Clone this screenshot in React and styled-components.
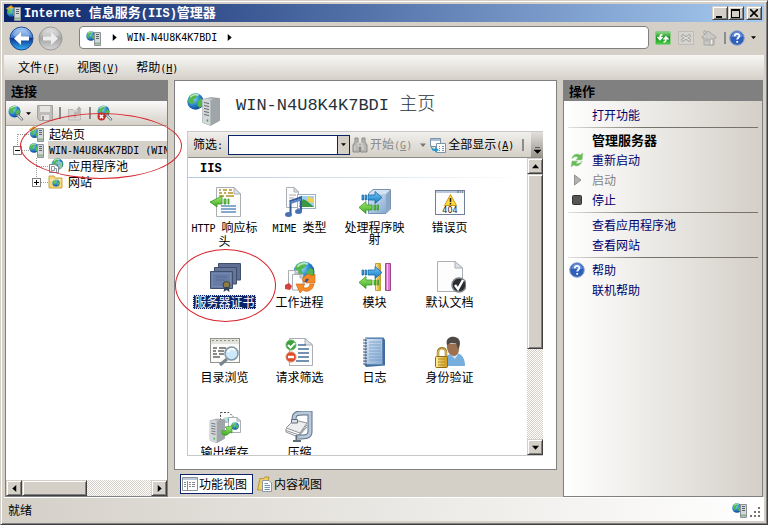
import React from "react";
import styled, { createGlobalStyle, css } from "styled-components";

const face = "#d4d0c8";
const navy = "#0a246a";

const GlobalStyle = createGlobalStyle`
  * {
    box-sizing: border-box;
  }

  body {
    margin: 0;
    color: #000;
    font: 12px/16px "Noto Sans CJK SC", sans-serif;
  }

  button, input {
    margin: 0;
    padding: 0;
    border: 0;
    color: inherit;
    font: inherit;
    background: none;
  }

  svg {
    display: block;
    flex: none;
  }
`;

const raised = css`
  background: ${face};
  border: 1px solid;
  border-color: ${face} #404040 #404040 ${face};
  box-shadow: inset 1px 1px #fff, inset -1px -1px #808080;
`;

const dither = css`
  background: repeating-conic-gradient(#fff 0 25%, ${face} 0 50%) 0 0 / 2px 2px;
`;

const Window = styled.div`
  ${raised}
  position: relative;
  display: flex;
  flex-direction: column;
  height: 100vh;
  padding: 3px;
  overflow: hidden;
`;

const Latin = styled.span`
  font-family: "DejaVu Sans Mono", monospace;
  font-size: 10px;
`;

const BoldLatin = styled.span`
  font-family: "Liberation Mono", monospace;
  font-size: 12px;
  font-weight: bold;
`;

const TitleBar = styled.header`
  display: flex;
  align-items: center;
  gap: 2px;
  height: 18px;
  padding: 0 2px;
  color: #fff;
  background: linear-gradient(90deg, ${navy}, #a6caf0);
`;

const Title = styled.h1`
  flex: 1;
  margin: 0;
  font-size: 13px;
  line-height: 18px;
  white-space: pre;
`;

const WindowButtons = styled.div`
  display: flex;
  color: #000;

  button:last-child {
    margin-left: 2px;
  }
`;

const WindowButton = styled.button`
  ${raised}
  display: grid;
  place-items: center;
  width: 16px;
  height: 14px;
`;

const NavBar = styled.nav`
  display: flex;
  align-items: center;
  height: 33px;
  padding: 0 8px 2px 5px;
`;

const NavButton = styled.button`
  margin: 2px 4px 0 0;
`;

const Address = styled.div`
  display: flex;
  flex: 1;
  align-items: center;
  gap: 9px;
  height: 23px;
  margin: 0 6px 0 12px;
  padding: 0 6px;
  background: #fff;
  border: 1px solid #808080;
  border-radius: 4px;
`;

const NavTools = styled.div`
  display: flex;
  align-items: center;
  gap: 7px;
`;

const Separator = styled.span`
  width: 2px;
  height: 12px;
  background: #8c8c8c;
`;

const HelpButton = styled.button`
  display: flex;
  align-items: center;
  gap: 6px;
  margin-left: -4px;
`;

const MenuBar = styled.div`
  display: flex;
  align-items: center;
  gap: 17px;
  height: 25px;
  padding: 0 14px;
  background: linear-gradient(#f8f7f5, ${face});
`;

const Main = styled.main`
  display: flex;
  flex: 1;
  gap: 6px;
  min-height: 0;
  padding: 0 1px;
`;

const SidePanel = styled.section`
  display: flex;
  flex: none;
  flex-direction: column;
  width: ${(p) => p.$width};
  border: 1px solid #808080;
  border-top: 0;
`;

const PanelHeader = styled.h2`
  margin: 0;
  height: 21px;
  padding: 0 5px;
  font-size: 13px;
  line-height: 22px;
  background: #808080;
`;

const ConnectionTools = styled.div`
  display: flex;
  align-items: center;
  justify-content: space-between;
  height: 25px;
  padding: 0 54px 0 2px;
  background: linear-gradient(#fbfaf9, ${face});
  border-bottom: 1px solid #a8a59e;

  button {
    display: flex;
    align-items: center;
    gap: 2px;
  }
`;

const Tree = styled.ul`
  flex: 1;
  margin: 0;
  padding: 0;
  overflow: hidden;
  list-style: none;
  background: #fff;
`;

const TreeRow = styled.li`
  display: flex;
  align-items: center;
  height: 16px;
  padding-left: ${(p) => (p.$level ? 25 : 6)}px;
  white-space: nowrap;

  > span {
    flex: 1;
    margin-left: 3px;
    padding-left: 1px;
    background: ${(p) => (p.$selected ? face : "none")};
  }
`;

const HScroll = styled.div`
  ${dither}
  display: flex;
  height: 16px;
`;

const VScroll = styled.div`
  ${dither}
  display: flex;
  flex: none;
  flex-direction: column;
  width: 16px;
`;

const ScrollButton = styled.button`
  ${raised}
  display: grid;
  flex: none;
  place-items: center;
  width: 16px;
  height: 16px;
`;

const Track = styled.div`
  display: flex;
  flex: 1;
  flex-direction: ${(p) => (p.$vertical ? "column" : "row")};
`;

const Thumb = styled.div`
  ${raised}
  flex: 0 0 ${(p) => p.$size};
`;

const Center = styled.section`
  display: flex;
  flex: 1;
  flex-direction: column;
  min-width: 0;
`;

const Page = styled.div`
  display: flex;
  flex: 1;
  flex-direction: column;
  min-height: 0;
  padding: 12px 13px 13px 12px;
  background: #fff;
  border: 1px solid #808080;
`;

const PageHeader = styled.div`
  display: flex;
  gap: 15px;
  height: 38px;
`;

const PageTitle = styled.h2`
  margin: 0;
  color: #26323a;
  font-size: 18px;
  font-weight: 300;
  line-height: 18px;
  white-space: pre;

  span {
    font-family: "Liberation Mono", monospace;
    font-size: 17px;
  }
`;

const PageBody = styled.div`
  display: flex;
  flex: 1;
  flex-direction: column;
  min-height: 0;
  border: 1px solid #c8c8c8;
  border-right: 0;
`;

const FilterBar = styled.div`
  display: flex;
  flex: none;
  align-items: center;
  height: 26px;
  padding-left: 5px;
  background: linear-gradient(#f1efec, ${face});
  border-bottom: 1px solid #8e8c87;
  white-space: nowrap;
`;

const ComboBox = styled.div`
  display: flex;
  width: 122px;
  height: 20px;
  margin: 0 2px 0 5px;
  background: #fff;
  border: 1px solid ${navy};

  input {
    flex: 1;
    min-width: 0;
    padding: 0 3px;
    outline: 0;
  }

  button {
    display: grid;
    place-items: center;
    width: 12px;
    background: ${face};
    border-left: 1px solid ${navy};
  }
`;

const ToolButton = styled.button`
  display: flex;
  align-items: center;
  gap: 2px;
  margin-right: ${(p) => p.$gap || 0}px;
  color: ${(p) => (p.disabled ? "#8a8883" : "#000")};
`;

const Overflow = styled.button`
  display: grid;
  gap: 1px;
  place-content: end center;
  width: 12px;
  height: 25px;
  margin-left: auto;
  padding-bottom: 3px;
  background: linear-gradient(#e2e0dc, #97948e);
`;

const ListArea = styled.div`
  display: flex;
  flex: 1;
  min-height: 0;
`;

const Group = styled.div`
  flex: 1;
  overflow: hidden;
`;

const GroupTitle = styled.h3`
  height: 20px;
  margin: 0;
  padding-left: 12px;
  line-height: 16px;
  border-bottom: 1px solid;
  border-image: linear-gradient(90deg, #b4c8de, #fff) 1;
`;

const Features = styled.div`
  display: grid;
  grid-template-columns: repeat(auto-fill, 75px);
  grid-auto-rows: 75px;
  padding-top: 8px;
`;

const FeatureButton = styled.button`
  display: flex;
  flex-direction: column;
  align-items: center;
  padding: 0 4px 0 2px;
  line-height: 12px;

  > span {
    margin-top: 2px;
    padding: 1px;
    color: ${(p) => (p.$selected ? "#fff" : "#000")};
    background: ${(p) => (p.$selected ? navy : "none")};
    outline: ${(p) => (p.$selected ? "1px dotted #f5db95" : "none")};
    outline-offset: -1px;
  }
`;

const ViewTabs = styled.div`
  display: flex;
  align-items: center;
  gap: 2px;
  height: 27px;
  padding-left: 6px;
`;

const ViewTab = styled.button`
  display: flex;
  align-items: center;
  gap: 1px;
  height: 20px;
  padding: 0 ${(p) => (p.$active ? 5 : 0)}px 0 1px;
  background: ${(p) => (p.$active ? "#fff" : "none")};
  border: 1px solid ${(p) => (p.$active ? navy : "transparent")};
`;

const ActionList = styled.div`
  flex: 1;
  padding: 4px 4px 0;
  background: linear-gradient(90deg, #fff, ${face});
`;

const ActionRow = styled.div`
  display: grid;
  grid-template-columns: 16px 1fr;
  align-items: center;
  gap: 7px;
  height: 20px;
  padding-left: 1px;
`;

const ActionLink = styled.a`
  grid-column: 2;
  color: #00006b;
  text-decoration: none;
`;

const ActionTitle = styled.strong`
  grid-column: 2;
  font-size: 13px;
`;

const ActionOff = styled.span`
  grid-column: 2;
  color: #858585;
`;

const Rule = styled.hr`
  height: 1px;
  margin: 2px 0;
  border: 0;
  background: linear-gradient(90deg, #e4e2dd, #77736a 40%);
`;

const StatusBar = styled.footer`
  display: flex;
  align-items: center;
  justify-content: space-between;
  height: 24px;
  padding: 0 2px 0 4px;
  background: linear-gradient(90deg, ${face}, #fff);
  border-top: 1px solid #fff;

  > div {
    display: flex;
    align-items: flex-end;
    gap: 2px;
  }
`;

const Ring = styled.div`
  position: absolute;
  left: ${(p) => p.$x}px;
  top: ${(p) => p.$y}px;
  width: ${(p) => p.$w}px;
  height: ${(p) => p.$h}px;
  border: 1px solid #d8232a;
  border-radius: 50%;
  pointer-events: none;
`;

/* ---------- drawings ---------- */

const Gradients = () => (
  <svg width="0" height="0" style={{ position: "absolute" }}>
    <defs>
      <radialGradient id="sea" cx=".35" cy=".3" r=".75">
        <stop offset="0" stopColor="#a8e4fa" />
        <stop offset=".5" stopColor="#2f8fd0" />
        <stop offset="1" stopColor="#0b3f94" />
      </radialGradient>
      <linearGradient id="metal">
        <stop offset="0" stopColor="#f4f5f6" />
        <stop offset="1" stopColor="#82888e" />
      </linearGradient>
      <linearGradient id="blueBall" x2="0" y2="1">
        <stop offset="0" stopColor="#a9cdf5" />
        <stop offset=".45" stopColor="#3b76cf" />
        <stop offset=".5" stopColor="#0c3592" />
        <stop offset="1" stopColor="#35b2f5" />
      </linearGradient>
      <linearGradient id="grayBall" x2="0" y2="1">
        <stop offset="0" stopColor="#dedede" />
        <stop offset=".5" stopColor="#a5a5a5" />
        <stop offset="1" stopColor="#d6d6d6" />
      </linearGradient>
      <linearGradient id="greenBox" x2="0" y2="1">
        <stop offset="0" stopColor="#8bdc86" />
        <stop offset=".5" stopColor="#16911b" />
        <stop offset="1" stopColor="#4fd44c" />
      </linearGradient>
      <linearGradient id="gold">
        <stop offset="0" stopColor="#fff0a0" />
        <stop offset="1" stopColor="#cf9716" />
      </linearGradient>
      <linearGradient id="cover" x2="1" y2="1">
        <stop offset="0" stopColor="#d6e6f5" />
        <stop offset="1" stopColor="#86a9d2" />
      </linearGradient>
      <linearGradient id="green" x2="0" y2="1">
        <stop offset="0" stopColor="#a6ec74" />
        <stop offset="1" stopColor="#3da822" />
      </linearGradient>
      <linearGradient id="blue" x2="0" y2="1">
        <stop offset="0" stopColor="#73c8f7" />
        <stop offset="1" stopColor="#1679c4" />
      </linearGradient>
    </defs>
  </svg>
);

const Icon = ({ size = 16, box = size, children }) => (
  <svg width={size} height={size} viewBox={`0 0 ${box} ${box}`} fill="none" aria-hidden="true">
    {children}
  </svg>
);

const Globe = ({ x, y, r }) => (
  <g transform={`translate(${x} ${y}) scale(${r / 8})`}>
    <circle r="8" fill="url(#sea)" />
    <path d="M-6-5C-3-8 1-8 2-6L0-3-2-2-1 1-4 3-7 0zM2 0L5-3 7-2C8 2 6 5 4 6L2 4z" fill="#53b84c" />
    <path d="M-5-4C-3-7 1-7 3-6" stroke="#e2fae8" strokeWidth="1.5" opacity=".7" />
  </g>
);

const Server = ({ x, y, s = 1 }) => (
  <g transform={`translate(${x} ${y}) scale(${s})`}>
    <path d="M0 2L8 0 17 1V23L8 28 0 25z" fill="url(#metal)" stroke="#8d9296" strokeWidth=".7" />
    <path d="M0 2L8 3V28L0 25z" fill="#d3d7da" />
    <path d="M8 3L17 1V23L8 28z" fill="#a0a5a9" />
    <path d="M1.500 5L6.500 6M1.500 8L6.500 9M1.500 11L6.500 12M1.500 14L6.500 15M1.500 17L6.500 18" stroke="#60676d" />
    <path d="M5 22V24" stroke="#2faa35" strokeWidth="1.500" />
  </g>
);

const SmallServer = () => (
  <g>
    <path d="M8.500 2.500H14.500V15.500H8.500z" fill="#d3d8da" stroke="#8b9396" />
    <path d="M10 4.500H13M10 6.500H13M10 8.500H13" stroke="#59636b" />
    <path d="M9 13.500H14" stroke="#8fb08e" strokeWidth="2" />
  </g>
);

const ServerIcon = ({ size }) =>
  size > 16 ? (
    <Icon size={size} box={34}>
      <Globe x={8.500} y={8.500} r={8.300} />
      <Server x={15.500} y={4.500} />
    </Icon>
  ) : (
    <Icon>
      <Globe x={5} y={6} r={4.800} />
      <SmallServer />
    </Icon>
  );

const StartIcon = () => (
  <Icon>
    <path d="M.5 3.500L5 .5 9 4 4 7z" fill="#f5b52c" stroke="#d08a28" strokeWidth=".7" />
    <Globe x={5.500} y={7.500} r={4.500} />
    <SmallServer />
  </Icon>
);

const Ball = ({ fill, back }) => (
  <Icon size={25}>
    <circle cx="12.500" cy="12.500" r="11.500" fill={fill} stroke={back ? "#234a8c" : "#999"} />
    <path d="M4 9C7 2 18 2 21 9 17 12 8 12 4 9z" fill="#fff" opacity=".25" />
    <path
      d={back ? "M5 12.500L12 6V10.500H20V14.500H12V19z" : "M20 12.500L13 6V10.500H5V14.500H13V19z"}
      fill={back ? "#fff" : "#ededed"}
    />
  </Icon>
);

const HelpIcon = () => (
  <Icon>
    <circle cx="8" cy="8" r="7.300" fill="#2f5fb8" stroke="#8ea5cf" />
    <path d="M2.500 7A5.500 5.500 0 0 1 13.500 7z" fill="#6f98dc" opacity=".8" />
    <path d="M5.800 6.200C5.800 3.200 10.300 3.200 10.300 6 10.300 7.700 8.200 7.700 8.200 9.500M8.200 11V12.700" stroke="#fff" strokeWidth="1.800" />
  </Icon>
);

const RefreshIcon = () => (
  <Icon>
    <rect x=".5" y="1.500" width="15" height="13" rx="1" fill="url(#greenBox)" stroke="#8fc78d" />
    <path d="M7.500 4.500C5.500 4.500 5 6 5 8M2.500 7L5 9.500 7.500 7M8.500 12C10.500 12 11 10.500 11 8.500M8.500 9.500L11 7 13.500 9.500" stroke="#fff" strokeWidth="1.600" />
  </Icon>
);

const StopIcon = () => (
  <Icon>
    <rect x=".5" y="1.500" width="15" height="13" fill="#d6d4cf" stroke="#bebcb8" />
    <path d="M3.500 5L12.500 11M3.500 11L12.500 5" stroke="#a3a19d" strokeWidth="3" />
    <path d="M4 5.500L12 10.500M4 10.500L12 5.500" stroke="#e5e3df" strokeWidth="1.300" />
  </Icon>
);

const HomeIcon = () => (
  <Icon>
    <path d="M1 7L7 1 15 7V8H13V15H3V8H1z" fill="#cbc9c5" stroke="#aaa8a4" />
    <path d="M3 1H5V4H3zM5 9H7V11H5zM9 9H12V15H9z" fill="#f0efed" stroke="#a5a39f" />
  </Icon>
);

const Caret = ({ dir = "down", size = 7, color = "#000" }) => {
  const turn = { down: 0, left: 90, up: 180, right: 270 }[dir];
  return (
    <svg width={size} height={size} viewBox="0 0 8 8" aria-hidden="true">
      <path d="M0 2H8L4 6.500z" fill={color} transform={`rotate(${turn} 4 4)`} />
    </svg>
  );
};

const ConnectIcon = ({ off }) => (
  <Icon>
    <Globe x={6.500} y={6.500} r={6} />
    <path d="M8 9L11 10 15 14 14 15.500 10 12z" fill="#dce1e5" stroke="#747c82" />
    {off && (
      <>
        <circle cx="4.500" cy="11.500" r="4" fill="#c22b27" />
        <path d="M2.800 9.800L6.200 13.200M6.200 9.800L2.800 13.200" stroke="#fff" strokeWidth="1.500" />
      </>
    )}
  </Icon>
);

const SaveIcon = () => (
  <Icon>
    <path d="M.5.5H15.500V15.500H2.500L.5 13.500z" fill="#c0beba" stroke="#a3a19e" />
    <path d="M3 1H13V7H3zM4 10H12V15H4z" fill="#e6e4e1" />
    <path d="M5 11H7V15H5z" fill="#969492" />
  </Icon>
);

const UpIcon = () => (
  <Icon>
    <path d="M1.500 4.500H6L7.500 6H13.500V15H1.500z" fill="#d6d4d1" stroke="#bcbab7" />
    <path d="M8 13V8H12V3M10 5L12 2.500 14 5" stroke="#b1afac" strokeWidth="1.500" />
  </Icon>
);

const PoolIcon = () => (
  <Icon>
    <Globe x={9.500} y={6} r={5.800} />
    <path d="M11 3V11M13 4V11" stroke="#c4dcea" />
    <path d="M1.500 6.500H7L10.500 9V14.500H1.500z" fill="#fff" stroke="#7c8991" />
    <path d="M3.500 8.500H6.500V12.500H3.500zM6.500 10.500H8.500V14" stroke="#8a979f" />
  </Icon>
);

const SitesIcon = () => (
  <Icon>
    <path d="M1 2H6L7.500 4H14V14H1z" fill="#f4d778" stroke="#c8a344" />
    <path d="M2 6H13" stroke="#fff5c8" />
    <Globe x={8} y={9} r={3.600} />
  </Icon>
);

const BinocularsIcon = () => (
  <Icon>
    <path d="M3 1H6V5L7.500 8V15H1V8L3 5zM10 1H13V5L15 8V15H8.500V8L10 5z" fill="#b8b6b3" stroke="#8e8c89" />
    <path d="M6 6H10V9H6zM3 9V13M11 9V13" fill="#aaa8a5" stroke="#dedcda" />
  </Icon>
);

const ShowAllIcon = () => (
  <Icon>
    <path d="M.5 1.500H10.500V9.500H.5z" fill="#fff" stroke="#7c94ab" />
    <path d="M1 2H10V4H1z" fill="#a9bfd3" />
    <path d="M6.500 6.500H15.500V15.500H6.500z" fill="#fff" stroke="#7c94ab" />
    <path d="M9 9.500H10M12 9.500H14M9 11.500H10M12 11.500H14M9 13.500H10M12 13.500H14" stroke="#718eb2" />
    <path d="M1 8C2 11 3 12 5 12V10L9 13 5 15.500V14C2 14 1 12 1 8z" fill="#2698d1" />
  </Icon>
);

const ArrowPair = () => (
  <g strokeWidth=".8">
    <path d="M9 9H16V5.500L23 11.500 16 17.500V14H9zM6 9H7.500V14H6zM3 9H4.500V14H3z" fill="url(#blue)" stroke="#156aa9" />
    <path d="M13 19H7V15.500L0 21.500 7 27.500V24H13zM15 19H16.500V24H15zM18 19H19.500V24H18z" fill="url(#green)" stroke="#369823" />
  </g>
);

const Sheet = ({ d, fold }) => (
  <>
    <path d={d} fill="#fdfdfd" stroke="#a9afb5" />
    <path d={fold} fill="#dde3e8" stroke="#a9afb5" />
  </>
);

const drawings = {
  headers: (
    <>
      <Sheet d="M7.500 1.500H25L31.500 8V30.500H7.500z" fold="M25 1.500V8H31.500z" />
      <path d="M10 4H12M14 4H18M20 4H23M10 7H13M15 7H17M19 7H24M10 10H15M17 10H25" stroke="#b8931e" strokeWidth="1.500" />
      <path d="M12 20H27M12 23H27M12 26H27" stroke="#5f8dc0" strokeWidth="1.300" />
      <path d="M13 13V10L1 16 8 21V18H13zM15 13H17V18H15zM19 13H20V18H19z" fill="url(#green)" stroke="#369823" strokeWidth=".8" />
    </>
  ),
  mime: (
    <>
      <Sheet d="M2.500 1.500H10L14.500 6V21.500H2.500z" fold="M10 1.500V6H14.500z" />
      <path d="M5 9H12M5 12H10M5 15H8" stroke="#aaa" />
      <rect x="13.500" y="8.500" width="18" height="14" fill="#fff" stroke="#9cb0c5" />
      <path d="M15 10H30V21H15z" fill="#9dd2ef" />
      <path d="M15 21L19 13 23 15 30 21z" fill="#3a9843" />
      <path d="M23 10L30 13V17L24 16z" fill="#eed150" />
      <path d="M6.500 28V15L17 11.500V25" stroke="#365b9c" strokeWidth="2" />
      <path d="M6.500 17L17 13.500" stroke="#5d88c4" strokeWidth="2" />
      <ellipse cx="4.500" cy="28.500" rx="3.500" ry="2.500" fill="#4671b4" />
      <ellipse cx="14.500" cy="25.500" rx="3.500" ry="2.500" fill="#4671b4" />
    </>
  ),
  handlers: (
    <>
      <path d="M9.500 7.500L14 3.500H31.500V23L27 27.500H9.500z" fill="#d3e1f0" stroke="#7893b1" />
      <path d="M10 8H27V27H10z" fill="url(#cover)" />
      <path d="M27 8L31 4V23L27 27z" fill="#8ba6c5" />
      <ArrowPair />
    </>
  ),
  errors: (
    <>
      <rect x="1.500" y="4.500" width="29" height="24" fill="#fdfdfe" stroke="#6f7f99" />
      <path d="M2 5H30V7H2z" fill="#b9c9dd" />
      <path d="M23 6H25M26 6H27M28 6H29" stroke="#52677e" />
      <path d="M16.500 8.500L10.500 19.500H22.500z" fill="#ffd93b" stroke="#c99911" strokeLinejoin="round" />
      <path d="M16.500 12V16M16.500 17V18.500" stroke="#222" strokeWidth="1.600" />
      <text x="16" y="27" fill="#222" fontFamily="DejaVu Sans" fontSize="8" textAnchor="middle">404</text>
    </>
  ),
  certs: (
    <>
      <path d="M9.500 2.500H31.500V19H9.500z" fill="#5d7093" stroke="#3f4f6b" />
      <path d="M5.500 6.500H27.500V23H5.500z" fill="#64779a" stroke="#3f4f6b" />
      <path d="M1.500 10.500H23.500V27.500H1.500z" fill="#667ca6" stroke="#3f4f6b" />
      <path d="M3.500 12.500H21.500V25.500H3.500z" stroke="#7589ad" />
      <path d="M7 16H18M7 19H16" stroke="#546a92" />
      <circle cx="17.500" cy="24" r="3.500" fill="#8f7b43" stroke="#3e413a" />
      <path d="M15.500 26L14.500 31 17.500 29 20.500 31 20 26" fill="#30415e" />
    </>
  ),
  workers: (
    <>
      <Globe x={20} y={11} r={10.500} />
      <Sheet d="M4.500 9.500H14V27H4.500z" fold="M11 9.500V13H14z" />
      <Sheet d="M8.500 13.500H19V29H8.500z" fold="M16 13.500V17H19z" />
      <path d="M1 24L5 22 8 25 6 29 1 28z" fill="#d7413c" />
      <path d="M18 19C21 13 25 12 28 15L31 13V22H22L25 18C22 17 21 18 21 21z" fill="#f58a26" stroke="#c66318" strokeWidth=".6" />
      <path d="M30 23C29 30 22 32 19 29L16 32 12 23H21L19 26C22 28 25 27 26 23z" fill="#f58a26" stroke="#c66318" strokeWidth=".6" />
    </>
  ),
  modules: (
    <>
      <path d="M16.500 2.500H21.500V29.500H16.500z" fill="url(#gold)" stroke="#c0a030" />
      <path d="M26.500 2.500H31.500V29.500H26.500z" fill="#d97cc9" stroke="#9c478e" />
      <path d="M28.500 3V29" stroke="#f3bdea" />
      <ArrowPair />
    </>
  ),
  docs: (
    <>
      <Sheet d="M3.500.5H21L28.500 7V30.500H3.500z" fold="M21 .5V7H28.500z" />
      <circle cx="25" cy="24" r="7" fill="#292c30" stroke="#7d8185" strokeWidth="1.500" />
      <path d="M21 24L24 28 29 19" stroke="#fff" strokeWidth="2.500" />
    </>
  ),
  browse: (
    <>
      <rect x="1.500" y="2.500" width="29" height="24" fill="#fbfbfa" stroke="#93938c" />
      <path d="M2 3H30V8H2z" fill="#e3e3dd" />
      <path d="M3 4.500H28" stroke="#8b8b83" strokeDasharray="2 2" />
      <path d="M4 12H8M10 12H17M4 15H7M9 15H15M4 18H8M10 18H15M4 21H11" stroke="#656565" strokeWidth="1.500" />
      <path d="M18 23L11 29" stroke="#76858f" strokeWidth="3" />
      <circle cx="22.500" cy="17.500" r="6.500" fill="#cbe9fa" stroke="#8295a4" strokeWidth="1.500" />
      <path d="M19 16C20 13 23 12 26 14" stroke="#fff" strokeWidth="2" />
    </>
  ),
  filtering: (
    <>
      <Sheet d="M5.500 2.500H21L28.500 9V29.500H5.500z" fold="M21 2.500V9H28.500z" />
      <path d="M14 9H22M14 13H25M14 17H25M14 21H25M12 25H25" stroke="#456d9b" strokeWidth="1.300" />
      <circle cx="7" cy="9" r="5" fill="#39a33a" stroke="#6fb36e" />
      <path d="M4 9L6.500 11.500 11 7" stroke="#fff" strokeWidth="2" />
      <circle cx="7" cy="21" r="5" fill="#df4a27" stroke="#e08b70" />
      <path d="M4 21H10" stroke="#fff" strokeWidth="2.500" />
    </>
  ),
  logging: (
    <>
      <path d="M6 1.500H24.500L26 4V29.500L7 31 5.500 29z" fill="#436d9e" />
      <path d="M7 2.500H23.500V28.500H7z" fill="url(#cover)" stroke="#5f87b5" />
      <path d="M10 6H22M10 9H22M10 12H22M10 15H22M10 18H22M10 21H22M10 24H22" stroke="#6e93c0" opacity=".7" />
      <path d="M6 2.500V29" stroke="#e4ebf3" strokeWidth="4" strokeDasharray="1 2" />
      <path d="M6 3.500V29" stroke="#4b5f7a" strokeWidth="4" strokeDasharray="1 2" />
    </>
  ),
  auth: (
    <>
      <path d="M10 30C10 20 15 17 21 17S31 21 31 30z" fill="#76aede" />
      <path d="M16 18L21 23 25 17z" fill="#d0e6f6" />
      <path d="M13 8C12 15 16 20 20 20S26 15 25 7z" fill="#9b7152" />
      <path d="M13 9C11 2 17 0 21 1 27 2 27 9 24 13L22 7 17 7z" fill="#4d4947" />
      <path d="M4 22V16C4 11 12 11 12 16V22" stroke="#9b7a26" strokeWidth="2.500" />
      <path d="M4 21V16C4 12 12 12 12 16V21" stroke="#f2d878" />
      <rect x="1.500" y="20.500" width="12" height="11" rx="1" fill="url(#gold)" stroke="#906b16" />
      <path d="M4 23H11M4 26H11M4 29H11" stroke="#b28a23" />
    </>
  ),
  caching: (
    <>
      <path d="M11.500 1.500H20L24.500 6V20H11.500z" fill="#fff" stroke="#474747" strokeDasharray="2 1.500" />
      <Sheet d="M19.500 6.500H28L31.500 10V21.500H19.500z" fold="M28 6.500V10H31.500z" />
      <Globe x={26} y={15} r={3.800} />
      <g opacity=".4"><Globe x={17} y={9} r={3} /></g>
      <Server x={1} y={8} s={0.85} />
      <path d="M13 19C15 21 17 20 18 18L16 16 23 15V22L21 21C19 25 15 25 13 23z" fill="url(#green)" stroke="#369823" strokeWidth=".7" />
    </>
  ),
  compress: (
    <>
      <path d="M2 17L10 9 23 12 16 22z" fill="#eceeef" stroke="#8e9397" />
      <path d="M2 18V21L14 26 23 16M2 19.500L15 24 23 14" stroke="#8e9397" />
      <path d="M10 8C10 2 14 2 19 2H26V21C26 26 21 26 14 26" stroke="#5f7084" strokeWidth="5" />
      <path d="M10 8C10 2 14 2 19 2H26V21C26 26 21 26 14 26" stroke="#b8c9db" strokeWidth="3" />
      <path d="M7.500 8.500H13.500V12H7.500z" fill="#d9e0e7" stroke="#606e7b" />
      <path d="M12.500 24V30M9 30H17" stroke="#606e7b" strokeWidth="2" />
    </>
  ),
};

const FeatureViewIcon = () => (
  <Icon>
    <path d="M.5 1.500H15.500V14.500H.5z" fill="#fff" stroke="#8b8f94" />
    <path d="M1 2H15V4H1z" fill="#b9c8da" />
    <path d="M5.500 5V14M2 6.500H4M2 8.500H4M2 10.500H4M7 6.500H9M10 6.500H13M7 8.500H9M10 8.500H13M7 10.500H9M10 10.500H13" stroke="#858a92" />
  </Icon>
);

const ContentViewIcon = () => (
  <Icon>
    <path d="M.5 14L3 2.500H7L8 1H12L11 5 8 14z" fill="#edcf68" stroke="#b99637" />
    <path d="M5.500 4.500H12L14.500 7V15.500H5.500z" fill="#fff" stroke="#8e98a2" />
    <path d="M7.500 7.500H11M7.500 9.500H13M7.500 11.500H13M7.500 13.500H13" stroke="#6f95bb" />
  </Icon>
);

const RestartIcon = () => (
  <Icon>
    <path d="M3 7C3 2 9 1 11 3L14 1 13 8H7L9 5.500C7 4 4 5 3 7zM13 9C12 14 7 15 5 13L2 15 3 9H9L7 11C9 12 12 11 13 9z" fill="#68ba59" stroke="#9ed092" strokeWidth=".6" />
  </Icon>
);

const PlayIcon = () => (
  <Icon>
    <path d="M5.500 3L12 8 5.500 13z" fill="#b3b3b3" stroke="#929292" />
  </Icon>
);

const StopSquare = () => (
  <Icon>
    <rect x="3.500" y="3.500" width="9" height="9" rx="1" fill="#555" stroke="#333" />
  </Icon>
);

const GripIcon = () => (
  <svg width="12" height="12" viewBox="0 0 12 12" aria-hidden="true">
    <path d="M8 1H10V3H8zM4 5H6V7H4zM8 5H10V7H8zM0 9H2V11H0zM4 9H6V11H4zM8 9H10V11H8z" fill="#77736c" />
  </svg>
);

/* Expander box and dotted guides in front of a tree node */
const Guide = ({ sign, last, first }) => (
  <svg width="17" height="16" viewBox="0 0 17 16" fill="none" aria-hidden="true">
    <path d={`M5.500 ${first ? 8 : 0}V${last ? 8 : 16}M6 8.500H17`} stroke="#999" strokeDasharray="1 1" />
    {sign && (
      <>
        <rect x="1.500" y="4.500" width="8" height="8" fill="#fff" stroke="#808080" />
        <path d={sign === "+" ? "M3 8.500H8M5.500 6V11" : "M3 8.500H8"} stroke="#000" />
      </>
    )}
  </svg>
);

/* ---------- content ---------- */

const features = [
  { icon: "headers", label: <><Latin>HTTP </Latin>响应标头</> },
  { icon: "mime", label: <><Latin>MIME </Latin>类型</> },
  { icon: "handlers", label: "处理程序映射" },
  { icon: "errors", label: "错误页" },
  { icon: "certs", label: "服务器证书", selected: true },
  { icon: "workers", label: "工作进程" },
  { icon: "modules", label: "模块" },
  { icon: "docs", label: "默认文档" },
  { icon: "browse", label: "目录浏览" },
  { icon: "filtering", label: "请求筛选" },
  { icon: "logging", label: "日志" },
  { icon: "auth", label: "身份验证" },
  { icon: "caching", label: "输出缓存" },
  { icon: "compress", label: "压缩" },
];

const menus = [
  ["文件", "F"],
  ["视图", "V"],
  ["帮助", "H"],
];

const Key = ({ k }) => (
  <Latin>
    (<u>{k}</u>)
  </Latin>
);

const Action = ({ icon, children }) => (
  <ActionRow>
    {icon}
    <ActionLink href="#">{children}</ActionLink>
  </ActionRow>
);

const Connections = () => (
  <SidePanel $width="163px">
    <PanelHeader>连接</PanelHeader>
    <ConnectionTools>
      <button aria-label="连接">
        <ConnectIcon />
        <Caret size={5} />
      </button>
      <button aria-label="保存" disabled><SaveIcon /></button>
      <Separator />
      <button aria-label="向上" disabled><UpIcon /></button>
      <Separator />
      <button aria-label="断开"><ConnectIcon off /></button>
    </ConnectionTools>
    <Tree>
      <TreeRow>
        <Guide first />
        <StartIcon />
        <span>起始页</span>
      </TreeRow>
      <TreeRow $selected>
        <Guide sign="-" last />
        <ServerIcon size={16} />
        <span><Latin>WIN-N4U8K4K7BDI (WIN</Latin></span>
      </TreeRow>
      <TreeRow $level={1}>
        <Guide />
        <PoolIcon />
        <span>应用程序池</span>
      </TreeRow>
      <TreeRow $level={1}>
        <Guide sign="+" last />
        <SitesIcon />
        <span>网站</span>
      </TreeRow>
    </Tree>
    <HScroll>
      <ScrollButton aria-label="向左滚动"><Caret dir="left" /></ScrollButton>
      <Track>
        <Thumb $size="50%" />
      </Track>
      <ScrollButton aria-label="向右滚动"><Caret dir="right" /></ScrollButton>
    </HScroll>
  </SidePanel>
);

const HomePage = () => (
  <Center>
    <Page>
      <PageHeader>
        <ServerIcon size={34} />
        <PageTitle>
          <span>WIN-N4U8K4K7BDI </span>主页
        </PageTitle>
      </PageHeader>
      <PageBody>
        <FilterBar>
          <label htmlFor="filter">筛选<Latin>:</Latin></label>
          <ComboBox>
            <input id="filter" type="text" />
            <button aria-label="打开列表"><Caret size={5} /></button>
          </ComboBox>
          <ToolButton disabled $gap={8}>
            <BinocularsIcon />
            <span>开始<Key k="G" /></span>
          </ToolButton>
          <ToolButton disabled aria-label="开始选项" $gap={4}>
            <Caret size={6} color="#777" />
          </ToolButton>
          <ToolButton $gap={8}>
            <ShowAllIcon />
            <span>全部显示<Key k="A" /></span>
          </ToolButton>
          <Separator />
          <Overflow aria-label="更多">
            <svg width="7" height="7" aria-hidden="true">
              <path d="M1 .5H6M0 3H7L3.500 6.500z" stroke="#000" strokeWidth=".5" />
            </svg>
          </Overflow>
        </FilterBar>
        <ListArea>
          <Group>
            <GroupTitle><BoldLatin>IIS</BoldLatin></GroupTitle>
            <Features>
              {features.map((f) => (
                <FeatureButton key={f.icon} $selected={f.selected}>
                  <Icon size={32}>{drawings[f.icon]}</Icon>
                  <span>{f.label}</span>
                </FeatureButton>
              ))}
            </Features>
          </Group>
          <VScroll>
            <ScrollButton aria-label="向上滚动"><Caret dir="up" /></ScrollButton>
            <Track $vertical>
              <Thumb $size="66%" />
            </Track>
            <ScrollButton aria-label="向下滚动"><Caret /></ScrollButton>
          </VScroll>
        </ListArea>
      </PageBody>
    </Page>
    <ViewTabs>
      <ViewTab $active>
        <FeatureViewIcon />
        功能视图
      </ViewTab>
      <ViewTab>
        <ContentViewIcon />
        内容视图
      </ViewTab>
    </ViewTabs>
  </Center>
);

const Actions = () => (
  <SidePanel $width="200px">
    <PanelHeader>操作</PanelHeader>
    <ActionList>
      <Action>打开功能</Action>
      <Rule />
      <ActionRow>
        <ActionTitle>管理服务器</ActionTitle>
      </ActionRow>
      <Action icon={<RestartIcon />}>重新启动</Action>
      <ActionRow>
        <PlayIcon />
        <ActionOff>启动</ActionOff>
      </ActionRow>
      <Action icon={<StopSquare />}>停止</Action>
      <Rule />
      <Action>查看应用程序池</Action>
      <Action>查看网站</Action>
      <Rule />
      <Action icon={<HelpIcon />}>帮助</Action>
      <Action>联机帮助</Action>
    </ActionList>
  </SidePanel>
);

const App = () => {
  return (
    <>
      <GlobalStyle />
      <Gradients />
      <Window>
        <TitleBar>
          <StartIcon />
          <Title>
            <BoldLatin>Internet </BoldLatin>信息服务<BoldLatin>(IIS)</BoldLatin>管理器
          </Title>
          <WindowButtons>
            <WindowButton aria-label="最小化">
              <svg width="10" height="9"><path d="M1 7H7V9H1z" /></svg>
            </WindowButton>
            <WindowButton aria-label="最大化">
              <svg width="10" height="9"><path d="M0 0H9V9H0zM1 2V8H8V2z" fillRule="evenodd" /></svg>
            </WindowButton>
            <WindowButton aria-label="关闭">
              <svg width="8" height="8"><path d="M0 0L8 8M8 0L0 8" stroke="#000" strokeWidth="1.600" /></svg>
            </WindowButton>
          </WindowButtons>
        </TitleBar>
        <NavBar>
          <NavButton aria-label="后退"><Ball fill="url(#blueBall)" back /></NavButton>
          <NavButton aria-label="前进" disabled><Ball fill="url(#grayBall)" /></NavButton>
          <Address>
            <ServerIcon size={16} />
            <Caret dir="right" />
            <Latin>WIN-N4U8K4K7BDI</Latin>
            <Caret dir="right" />
          </Address>
          <NavTools>
            <button aria-label="刷新"><RefreshIcon /></button>
            <button aria-label="停止" disabled><StopIcon /></button>
            <button aria-label="主页" disabled><HomeIcon /></button>
            <Separator />
            <HelpButton aria-label="帮助">
              <HelpIcon />
              <Caret size={5} />
            </HelpButton>
          </NavTools>
        </NavBar>
        <MenuBar>
          {menus.map(([name, k]) => (
            <button key={k}>
              {name}
              <Key k={k} />
            </button>
          ))}
        </MenuBar>
        <Main>
          <Connections />
          <HomePage />
          <Actions />
        </Main>
        <StatusBar>
          <span>就绪</span>
          <div>
            <ServerIcon size={16} />
            <GripIcon />
          </div>
        </StatusBar>
        <Ring $x={19} $y={112} $w={162} $h={66} />
        <Ring $x={174} $y={248} $w={101} $h={73} />
      </Window>
    </>
  );
};

export default App;
